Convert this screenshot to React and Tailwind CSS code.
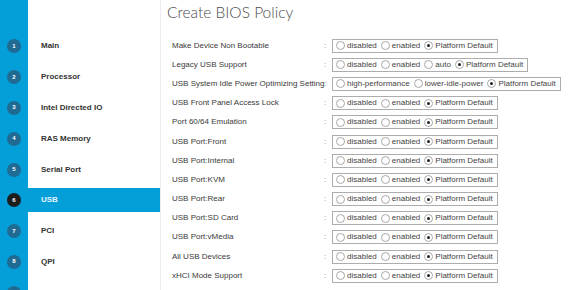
import React from "react";

const nav = [
  "Main",
  "Processor",
  "Intel Directed IO",
  "RAS Memory",
  "Serial Port",
  "USB",
  "PCI",
  "QPI",
  "LOM and PCIe Slots",
];

const std = ["disabled", "enabled", "Platform Default"];
const rows = [
  ["Make Device Non Bootable", std],
  ["Legacy USB Support", ["disabled", "enabled", "auto", "Platform Default"]],
  ["USB System Idle Power Optimizing Setting", ["high-performance", "lower-idle-power", "Platform Default"]],
  ["USB Front Panel Access Lock", std],
  ["Port 60/64 Emulation", std],
  ["USB Port:Front", std],
  ["USB Port:Internal", std],
  ["USB Port:KVM", std],
  ["USB Port:Rear", std],
  ["USB Port:SD Card", std],
  ["USB Port:vMedia", std],
  ["All USB Devices", std],
  ["xHCI Mode Support", std],
];

function Radio({ checked }) {
  return (
    <span className="w-[9px] h-[9px] rounded-full border border-[#a8a8a8] bg-white flex items-center justify-center shrink-0">
      {checked && <span className="w-[3px] h-[3px] rounded-full bg-[#222]" />}
    </span>
  );
}

export default function App() {
  return (
    <div
      className="w-[576px] h-[290px] overflow-hidden flex bg-white"
      style={{ fontFamily: '"Liberation Sans", Arial, sans-serif' }}
    >
      <div className="w-[160px] flex shrink-0">
        <div className="w-[28px] bg-[#049fd9] flex flex-col pt-[31px]">
          {nav.map((n, i) => (
            <div key={n} className="h-[30.8px] flex items-center justify-center shrink-0">
              <span
                className={`w-[14px] h-[14px] rounded-full flex items-center justify-center text-[6px] font-bold text-white ${
                  i === 5 ? "bg-[#1d1d1d]" : "bg-[#1f6b93]"
                }`}
              >
                {i + 1}
              </span>
            </div>
          ))}
        </div>
        <div className="w-[132px] flex flex-col pt-[31px]">
          {nav.map((n, i) => (
            <div key={n} className="h-[30.8px] flex items-center shrink-0">
              <div
                className={`h-[24px] w-full flex items-center pl-[13px] text-[8px] font-bold ${
                  i === 5 ? "bg-[#049fd9] text-[#e3f5fd]" : "text-[#333]"
                }`}
              >
                {n}
              </div>
            </div>
          ))}
        </div>
      </div>
      <div className="flex-1 border-l border-[#ececec] flex flex-col">
        <div
          className="h-[36px] pt-[5px] pl-[6px] text-[15.5px] leading-none font-light text-[#4b4b4b] shrink-0"
          style={{ fontFamily: "Lato, 'Liberation Sans', sans-serif" }}
        >
          Create BIOS Policy
        </div>
        {rows.map(([label, opts]) => (
          <div key={label} className="h-[19.2px] flex items-center shrink-0 pl-[11px] text-[8px] text-[#3a3a3a]">
            <div className="w-[152px] whitespace-nowrap">{label}</div>
            <div className="w-[8px] text-[#8a8a8a]">:</div>
            <div className="h-[14px] border border-[#adadad] flex items-center pl-[3px] pr-[4px] gap-[4px]">
              {opts.map((o, j) => (
                <span key={o} className="flex items-center gap-[2px] whitespace-nowrap text-[#444]">
                  <Radio checked={j === opts.length - 1} />
                  {o}
                </span>
              ))}
            </div>
          </div>
        ))}
      </div>
    </div>
  );
}
